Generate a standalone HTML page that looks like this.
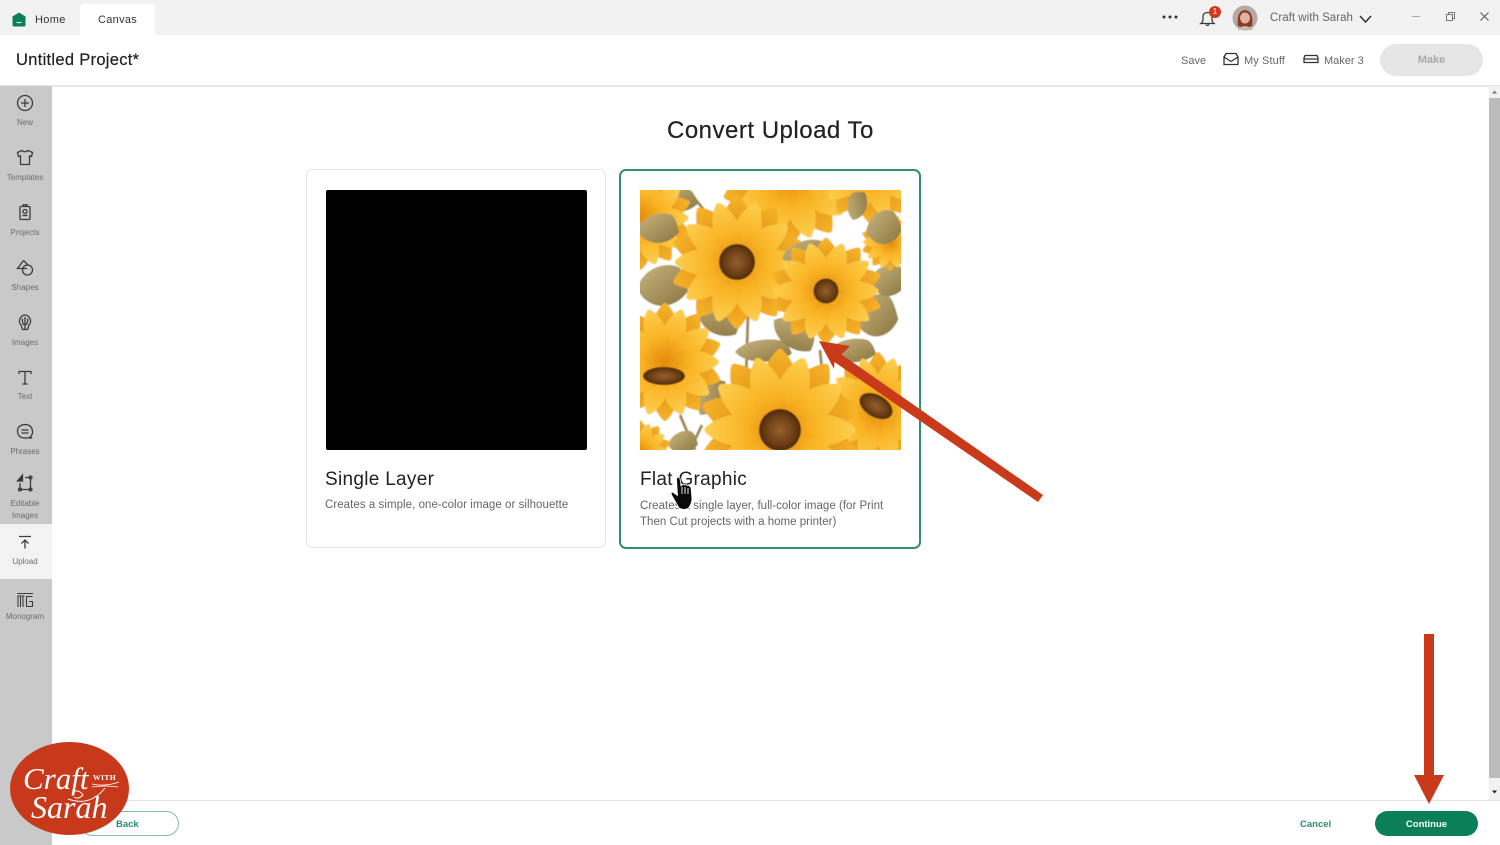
<!DOCTYPE html>
<html lang="en"><head><meta charset="utf-8"><title>Convert Upload To</title>
<style>
html,body{margin:0;padding:0;background:#fff}
body{width:1500px;height:845px;position:relative;overflow:hidden;font-family:"Liberation Sans",sans-serif;color:#222}
.a{position:absolute;white-space:nowrap}
.side{position:absolute;left:0;width:50px;text-align:center;font-size:8px;color:#6c6c6c;line-height:11.5px}
svg.i{position:absolute;fill:none;stroke:#3c3c3c;stroke-width:1.3}
</style></head><body>
<div class="a" style="left:0;top:0;width:1500px;height:35px;background:#f2f2f2"></div>
<div class="a" style="left:80px;top:4px;width:75px;height:31px;background:#fff;border-radius:3px 3px 0 0"></div>
<svg class="a" style="left:12px;top:12px" width="14" height="15" viewBox="0 0 14 15"><path d="M7 .5L13.500 4.500V13Q13.500 14.500 12 14.500H2Q.5 14.500 .5 13V4.500Z" fill="#0b8058"/><path d="M4.500 10Q7 11.500 9.500 10" stroke="#fff" fill="none"/></svg>
<div class="a" style="left:35px;top:14px;font-size:11px;letter-spacing:.35px;color:#333">Home</div>
<div class="a" style="left:98px;top:14px;font-size:11px;letter-spacing:.3px;color:#333">Canvas</div>

<div class="a" style="left:16px;top:51px;font-size:16.500px;letter-spacing:.3px;color:#222;-webkit-text-stroke:.2px #222">Untitled Project*</div>
<div class="a" style="left:0;top:85px;width:1500px;height:2px;background:#e8e8e8"></div>

<svg class="a" style="left:1160px;top:12px" width="20" height="10"><circle cx="4" cy="5" r="1.500" fill="#333"/><circle cx="10" cy="5" r="1.500" fill="#333"/><circle cx="16" cy="5" r="1.500" fill="#333"/></svg>
<svg class="i" style="left:1199px;top:9px" width="18" height="18" viewBox="0 0 18 18"><path d="M2 14.500Q4 13 4 10V8Q4 3.500 8.500 3.500Q13 3.500 13 8V10Q13 13 15 14.500ZM7 15.500Q8.500 17.500 10 15.500"/></svg>
<div class="a" style="left:1209px;top:6px;width:12px;height:12px;border-radius:50%;background:#d9351c;color:#fff;font-size:8px;line-height:12px;text-align:center">1</div>
<svg class="a" style="left:1232px;top:5px" width="26" height="26" viewBox="0 0 26 26"><circle cx="13" cy="13" r="12.500" fill="#b5a9a2"/><path d="M6 21Q4 6 13 5Q22 6 20 21Q13 24 6 21Z" fill="#8a3b27"/><ellipse cx="13" cy="13" rx="5" ry="5.500" fill="#e2b39c"/><path d="M5 25Q13 17 21 25Z" fill="#c9b8ad"/></svg>
<div class="a" style="left:1270px;top:12px;font-size:11.500px;letter-spacing:.03px;color:#666">Craft with Sarah</div>
<svg class="i" style="left:1359px;top:14px;stroke:#222" width="13" height="10" viewBox="0 0 13 10"><path d="M1 2L6.500 8L12 2"/></svg>
<div class="a" style="left:1412px;top:16px;width:8px;height:1px;background:#aaa"></div>
<svg class="i" style="left:1445px;top:11px;stroke:#777;stroke-width:1" width="11" height="11"><path d="M1.500 3.500H7.500V9.500H1.500ZM3.500 3.500V1.500H9.500V7.500H7.500"/></svg>
<svg class="i" style="left:1479px;top:11px;stroke:#555;stroke-width:1" width="11" height="11"><path d="M1.500 1.500L9.500 9.500M9.500 1.500L1.500 9.500"/></svg>

<div class="a" style="left:1181px;top:55px;font-size:11px;color:#666">Save</div>
<svg class="i" style="left:1223px;top:52px;stroke:#333" width="16" height="14" viewBox="0 0 16 14"><path d="M1 5L3 1.500H13L15 5V12.500H1ZM1 5L8 9.500L15 5"/></svg>
<div class="a" style="left:1244px;top:55px;font-size:11px;letter-spacing:.1px;color:#666">My Stuff</div>
<svg class="i" style="left:1303px;top:54px;stroke:#333" width="16" height="11" viewBox="0 0 16 11"><path d="M2 1.500H14L15 4V8.500H1V4ZM1 5H15"/></svg>
<div class="a" style="left:1324px;top:55px;font-size:11px;color:#666">Maker 3</div>
<div class="a" style="left:1380px;top:44px;width:103px;height:32px;border-radius:16px;background:#e6e6e6;color:#aaa;font-size:11px;font-weight:bold;text-align:center;line-height:33px">Make</div>

<div class="a" style="left:0;top:86px;width:52px;height:759px;background:#c9c9c9"></div>
<div class="a" style="left:0;top:524px;width:52px;height:55px;background:#f3f3f3"></div>

<svg class="i" style="left:15px;top:93px" width="20" height="20"><circle cx="10" cy="10" r="7.500"/><path d="M10 6V14M6 10H14"/></svg>
<div class="side" style="top:117px">New</div>
<svg class="i" style="left:15px;top:148px" width="20" height="20"><path d="M7 2.500L2.500 4.500L3.500 8.500L5.500 8V16.500H14.500V8L16.500 8.500L17.500 4.500L13 2.500Q10 5 7 2.500Z"/></svg>
<div class="side" style="top:172px">Templates</div>
<svg class="i" style="left:15px;top:203px" width="20" height="20"><rect x="5" y="3.500" width="10" height="13" rx="1"/><path d="M8 3.500V1.800H12V3.500M7.500 12.500H12.500"/><circle cx="10" cy="8.500" r="2"/></svg>
<div class="side" style="top:227px">Projects</div>
<svg class="i" style="left:15px;top:258px" width="20" height="20"><path d="M8.500 2.500L2.500 10.500H12"/><path d="M8.500 2.500L13 7"/><circle cx="12.500" cy="12" r="5"/></svg>
<div class="side" style="top:282px">Shapes</div>
<svg class="i" style="left:15px;top:313px" width="20" height="20"><path d="M6 12Q3.500 9.500 5 5.500Q7 2 10 2Q13 2 15 5.500Q16.500 9.500 14 12L12.500 16.500H7.500ZM10 4V16M7.500 5.500Q7 9 8.500 11.500H11.500Q13 9 12.500 5.500"/></svg>
<div class="side" style="top:337px">Images</div>
<svg class="i" style="left:15px;top:368px" width="20" height="20"><path d="M4 6V3.500H16V6M10 3.500V16M7.500 16H12.500"/></svg>
<div class="side" style="top:391px">Text</div>
<svg class="i" style="left:15px;top:422px" width="20" height="20"><path d="M15 15Q18 12.500 17.500 9Q16.500 2.500 10 2.500Q2.500 3 2.500 9.500Q3 16 10 16H17ZM6.500 8H13.500M6.500 11H13.500"/></svg>
<div class="side" style="top:446px">Phrases</div>
<svg class="i" style="left:15px;top:473px" width="20" height="20"><path d="M5 10V16.500H15.500V4.500H10"/><path d="M7.500 2V8H2.500Z" fill="#333"/><circle cx="15.500" cy="4.500" r="1.500"/><circle cx="5" cy="16.500" r="1.500"/><circle cx="15.500" cy="16.500" r="1.500"/></svg>
<div class="side" style="top:498px">Editable<br>Images</div>
<svg class="i" style="left:15px;top:533px" width="20" height="20"><path d="M4 3.500H16M10 15.500V7M6.500 10.500L10 7L13.500 10.500"/></svg>
<div class="side" style="top:556px">Upload</div>
<svg class="i" style="left:15px;top:591px;stroke-width:1.100" width="20" height="20"><path d="M2 2.500H18M3 16V5H9.500M5.500 5V16M8 5V16M17.500 5.500H11.500V15.500H17.500V10.500H14"/></svg>
<div class="side" style="top:611px">Monogram</div>

<div class="a" style="left:667px;top:117px;font-size:24px;letter-spacing:.5px;color:#222;-webkit-text-stroke:.2px #222">Convert Upload To</div>

<div class="a" style="left:306px;top:169px;width:298px;height:377px;border:1.500px solid #e4e4e4;border-radius:7px"></div>
<div class="a" style="left:326px;top:190px;width:261px;height:260px;background:#000;border-radius:2px"></div>
<div class="a" style="left:325px;top:469px;font-size:19px;letter-spacing:.3px;color:#222">Single Layer</div>
<div class="a" style="left:325px;top:499px;font-size:11.500px;letter-spacing:.05px;color:#666">Creates a simple, one-color image or silhouette</div>

<div class="a" style="left:619px;top:169px;width:298px;height:376px;border:2px solid #2f8f73;border-radius:7px"></div>

<svg class="a" style="left:640px;top:190px" width="261" height="260" viewBox="0 0 261 260">
<defs>
<clipPath id="c"><rect width="261" height="260"/></clipPath>
<filter id="s" x="-5%" y="-5%" width="110%" height="110%"><feGaussianBlur stdDeviation=".55"/></filter>
<linearGradient id="g1" x1="0" y1="1" x2="0" y2="0"><stop offset="0" stop-color="#e58c0c"/><stop offset=".45" stop-color="#f9b425"/><stop offset="1" stop-color="#fdcf50"/></linearGradient>
<linearGradient id="g2" x1="0" y1="1" x2="0" y2="0"><stop offset="0" stop-color="#d47a08"/><stop offset="1" stop-color="#f7b42a"/></linearGradient>
<linearGradient id="lg" x1="0" y1="0" x2="1" y2="1"><stop offset="0" stop-color="#c9b680"/><stop offset="1" stop-color="#8a7540"/></linearGradient>
<radialGradient id="b"><stop offset="0" stop-color="#96602d"/><stop offset=".7" stop-color="#6b3d14"/><stop offset="1" stop-color="#4d2a0c"/></radialGradient>
<path id="p" d="M0 0C14-10 16-36 3-52Q0-56-3-52C-16-36-14-10 0 0Z" fill="url(#g1)"/>
<path id="q" d="M0 0C16-12 18-40 3-56Q0-60-3-56C-18-40-16-12 0 0Z" fill="url(#g2)"/>
<g id="f">
<use href="#q"/><use href="#q" transform="rotate(36)"/><use href="#q" transform="rotate(72)"/><use href="#q" transform="rotate(108)"/><use href="#q" transform="rotate(144)"/><use href="#q" transform="rotate(180)"/><use href="#q" transform="rotate(216)"/><use href="#q" transform="rotate(252)"/><use href="#q" transform="rotate(288)"/><use href="#q" transform="rotate(324)"/>
<use href="#p" transform="rotate(18)"/><use href="#p" transform="rotate(54)"/><use href="#p" transform="rotate(90)"/><use href="#p" transform="rotate(126)"/><use href="#p" transform="rotate(162)"/><use href="#p" transform="rotate(198)"/><use href="#p" transform="rotate(234)"/><use href="#p" transform="rotate(270)"/><use href="#p" transform="rotate(306)"/><use href="#p" transform="rotate(342)"/>
</g>
<path id="l" d="M0 0C10-16 38-18 50-14C56-10 58-4 60 2C44 16 12 16 0 0Z" fill="url(#lg)"/>
</defs>
<g clip-path="url(#c)" filter="url(#s)">
<rect x="-5" y="-5" width="271" height="270" fill="#fff"/>
<path d="M48 0L68 25M108 125L106 190L92 212M35 125L52 155M160 170L168 205M180 160L184 200M40 225L55 260M62 235L50 260" stroke="#a58a55" stroke-width="3" fill="none"/>
<use href="#l" transform="translate(7 12) scale(.85 .9)"/>
<use href="#l" transform="translate(-3 98) scale(.85 1.450)"/>
<use href="#l" transform="translate(58 115) rotate(35) scale(.8 1.200)"/>
<use href="#l" transform="translate(95 162) scale(.95 .8)"/>
<use href="#l" transform="translate(134 130) rotate(38) scale(.8 1)"/>
<use href="#l" transform="translate(215 130) rotate(-5) scale(.72 1.500)"/>
<use href="#l" transform="translate(188 162) scale(.8 .85)"/>
<use href="#l" transform="translate(230 92) scale(.6 1.150)"/>
<use href="#l" transform="translate(60 225) rotate(-55) scale(.7 .8)"/>
<use href="#l" transform="translate(28 255) rotate(-5) scale(.5 .8)"/>
<use href="#f" transform="translate(150 -14) scale(1.200)"/>
<use href="#f" transform="translate(230 -22) scale(.95)"/>
<use href="#f" transform="translate(250 52) scale(.5)"/>
<use href="#f" transform="translate(0 28) scale(.9)"/>
<use href="#l" transform="translate(-3 40) scale(.7 1.050)"/>
<use href="#l" transform="translate(-3 98) scale(.85 1.450)"/>
<use href="#f" transform="translate(97 72) scale(1.150)"/>
<circle cx="97" cy="72" r="18" fill="url(#b)"/>
<use href="#l" transform="translate(142 68) rotate(-5) scale(.8 1)"/>
<use href="#l" transform="translate(226 42) rotate(-8) scale(.6 1.200)"/>
<use href="#l" transform="translate(213 30) rotate(-70) scale(.5 .7)"/>
<use href="#f" transform="translate(186 101) scale(.98 .92)"/>
<circle cx="186" cy="101" r="12.500" fill="url(#b)"/>
<use href="#f" transform="translate(25 172) scale(1 1.020)"/>
<ellipse cx="24" cy="186" rx="21" ry="9" fill="url(#b)"/>
<use href="#f" transform="translate(238 220) scale(.95 1)"/>
<ellipse cx="236" cy="216" rx="18" ry="11" transform="rotate(30 236 216)" fill="url(#b)"/>
<use href="#f" transform="translate(140 240) scale(1.400)"/>
<circle cx="140" cy="240" r="21" fill="url(#b)"/>
<use href="#f" transform="translate(0 262) scale(.55)"/>
</g>
</svg>

<div class="a" style="left:640px;top:469px;font-size:19px;letter-spacing:.3px;color:#222">Flat Graphic</div>
<div class="a" style="left:640px;top:499px;font-size:11.500px;letter-spacing:.02px;color:#666;line-height:15.500px;white-space:normal;width:262px">Creates a single layer, full-color image (for Print Then Cut projects with a home printer)</div>

<svg class="a" style="left:668px;top:475px" width="30" height="36" viewBox="0 0 30 36"><path d="M9 2.500Q11 1.500 12 3.500L13 11L15.500 9L16.500 10L18 9.500L19 10.500L21 10.500L23 12.500L24 24Q23.500 30 20 33.500Q15 35.500 11 33L3.500 20Q2.500 17.500 4.500 17L9.500 20.500L8.500 4Z" fill="#0a0a0a" stroke="#fff" stroke-width=".8"/><path d="M14 12V19M17 12V19M20 13V19" stroke="#fff" stroke-width=".9"/></svg>

<svg class="a" style="left:0;top:0;pointer-events:none" width="1500" height="845" viewBox="0 0 1500 845"><path d="M819 341L850 346L841.500 354.500L1043 495L1038 502L834.500 362L834 369Z" fill="#c93a1b"/></svg>

<div class="a" style="left:1489px;top:86px;width:11px;height:714px;background:#f1f1f1"></div>
<div class="a" style="left:1489px;top:98px;width:11px;height:680px;background:#bcbcbc"></div>
<svg class="a" style="left:1489px;top:87px" width="11" height="10"><path d="M3 6.500L5.500 3.500L8 6.500Z" fill="#777"/></svg>
<svg class="a" style="left:1489px;top:787px" width="11" height="10"><path d="M3 3.500L5.500 6.500L8 3.500Z" fill="#222"/></svg>

<div class="a" style="left:52px;top:800px;width:1448px;height:1px;background:#e6e6e6"></div>
<div class="a" style="left:80px;top:811px;width:97px;height:23px;border:1.500px solid #7fbfa9;border-radius:13px;background:#fff"></div>
<div class="a" style="left:116px;top:819px;font-size:9.500px;font-weight:bold;color:#2b8b70">Back</div>
<div class="a" style="left:1300px;top:819px;font-size:9.500px;font-weight:bold;color:#2b8b70">Cancel</div>
<div class="a" style="left:1375px;top:811px;width:103px;height:25px;border-radius:13px;background:#0b8058;color:#fff;font-size:9.500px;font-weight:bold;text-align:center;line-height:27px">Continue</div>

<svg class="a" style="left:1410px;top:630px" width="40" height="180"><path d="M14 4H24V145H34L19 174L4 145H14Z" fill="#c93a1b"/></svg>

<svg class="a" style="left:0;top:735px" width="140" height="110" viewBox="0 0 140 110">
<ellipse cx="69.500" cy="53.500" rx="59.500" ry="46.500" fill="#c8391c"/>
<text x="23" y="54" font-family="'Liberation Serif',serif" font-style="italic" font-size="31" fill="#fff">Craft</text>
<text x="93" y="45" font-family="'Liberation Serif',serif" font-weight="bold" font-size="7.500" letter-spacing=".5" fill="#fff">WITH</text>
<path d="M92 49Q105 52 119 47M92 52Q104 50 118 52" stroke="#fff" stroke-width=".8" fill="none"/>
<path d="M68 64Q90 72 105 53M72 58Q78 53 83 60Q78 65 74 62" stroke="#fff" fill="none"/>
<text x="31" y="83" font-family="'Liberation Serif',serif" font-style="italic" font-size="32" fill="#fff">Sarah</text>
</svg>
</body></html>
